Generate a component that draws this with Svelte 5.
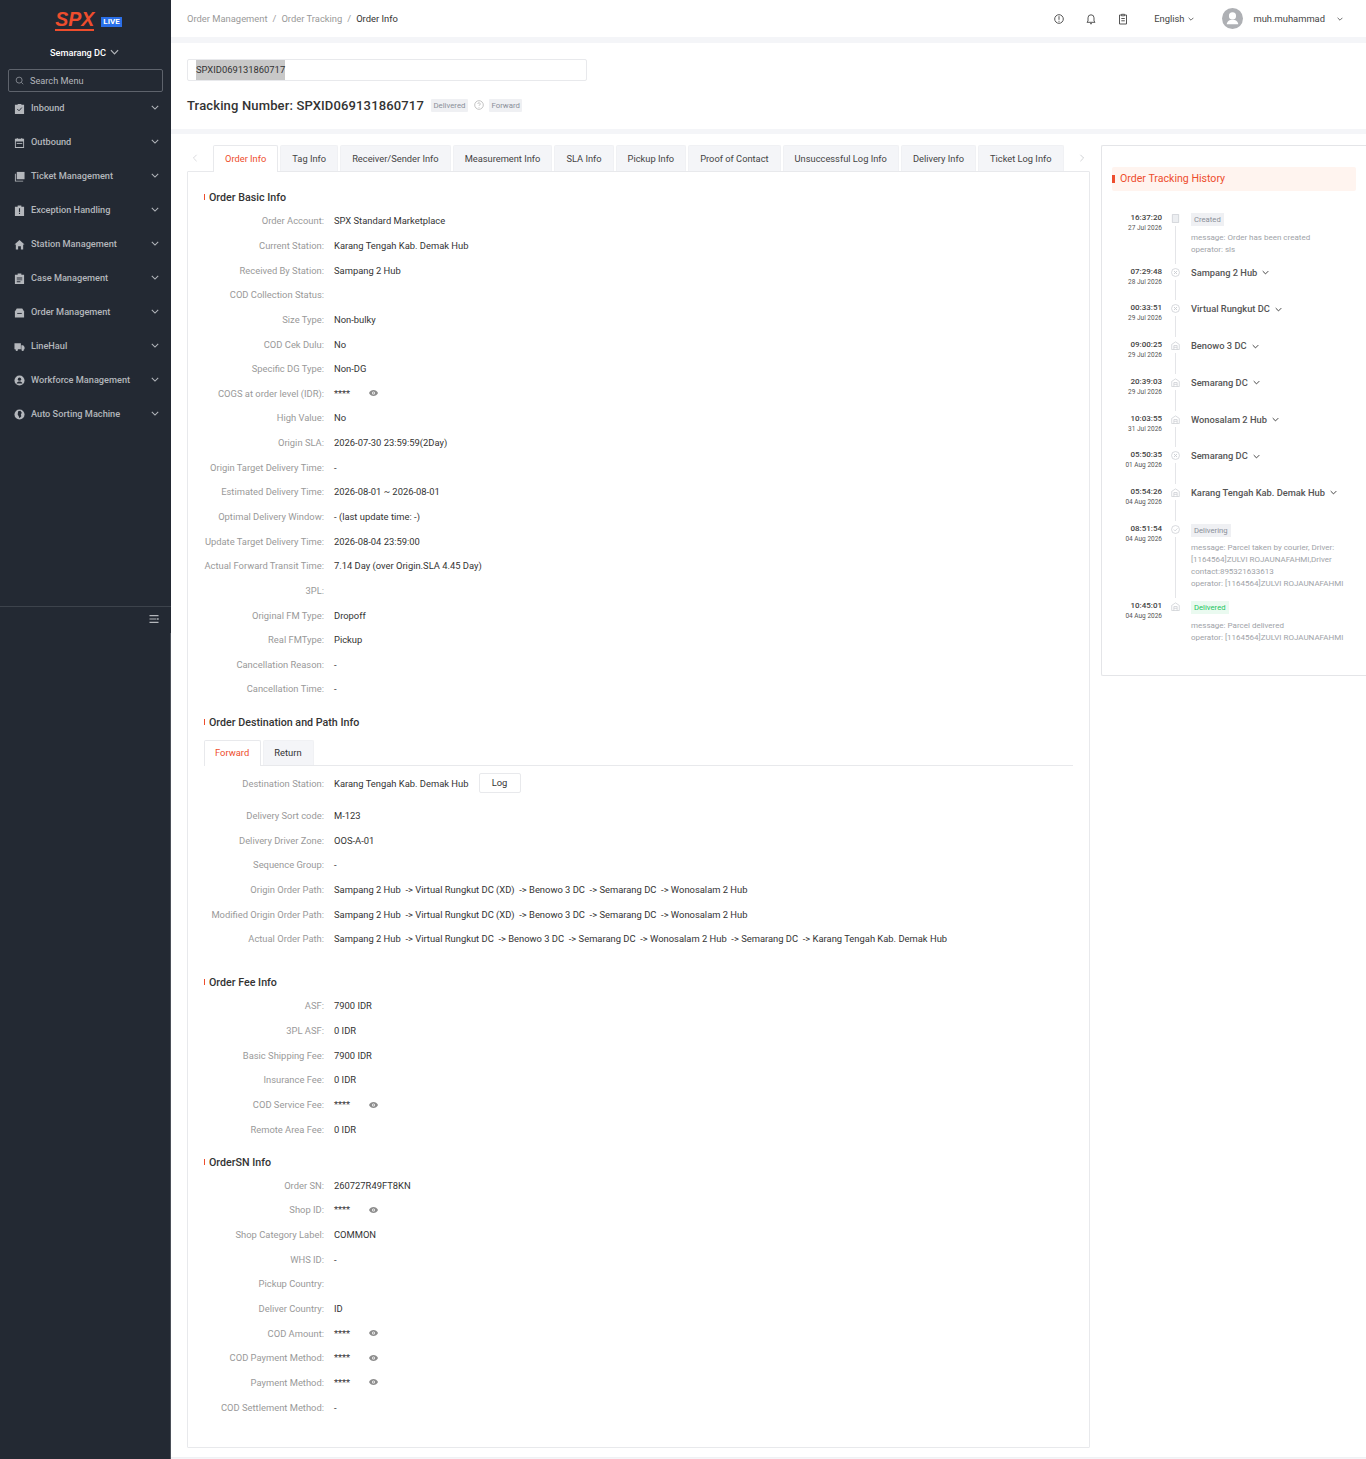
<script lang="ts">
  // Order info page: sidebar, header, tracking summary, detail tabs and history panel.
  const menu = [
    { label: 'Inbound', icon: 'check' },
    { label: 'Outbound', icon: 'cal' },
    { label: 'Ticket Management', icon: 'ticket' },
    { label: 'Exception Handling', icon: 'alert' },
    { label: 'Station Management', icon: 'home' },
    { label: 'Case Management', icon: 'case' },
    { label: 'Order Management', icon: 'order' },
    { label: 'LineHaul', icon: 'truck' },
    { label: 'Workforce Management', icon: 'user' },
    { label: 'Auto Sorting Machine', icon: 'globe' },
  ];

  const tabs = ['Tag Info', 'Receiver/Sender Info', 'Measurement Info', 'SLA Info', 'Pickup Info', 'Proof of Contact', 'Unsuccessful Log Info', 'Delivery Info', 'Ticket Log Info'];

  type Row = [string, string, boolean?];

  const basic: Row[] = [
    ['Order Account', 'SPX Standard Marketplace'],
    ['Current Station', 'Karang Tengah Kab. Demak Hub'],
    ['Received By Station', 'Sampang 2 Hub'],
    ['COD Collection Status', ''],
    ['Size Type', 'Non-bulky'],
    ['COD Cek Dulu', 'No'],
    ['Specific DG Type', 'Non-DG'],
    ['COGS at order level (IDR)', '****', true],
    ['High Value', 'No'],
    ['Origin SLA', '2026-07-30 23:59:59(2Day)'],
    ['Origin Target Delivery Time', '-'],
    ['Estimated Delivery Time', '2026-08-01 ~ 2026-08-01'],
    ['Optimal Delivery Window', '- (last update time: -)'],
    ['Update Target Delivery Time', '2026-08-04 23:59:00'],
    ['Actual Forward Transit Time', '7.14 Day (over Origin.SLA 4.45 Day)'],
    ['3PL', ''],
    ['Original FM Type', 'Dropoff'],
    ['Real FMType', 'Pickup'],
    ['Cancellation Reason', '-'],
    ['Cancellation Time', '-'],
  ];

  const path: Row[] = [
    ['Delivery Sort code', 'M-123'],
    ['Delivery Driver Zone', 'OOS-A-01'],
    ['Sequence Group', '-'],
    ['Origin Order Path', 'Sampang 2 Hub  -> Virtual Rungkut DC (XD)  -> Benowo 3 DC  -> Semarang DC  -> Wonosalam 2 Hub'],
    ['Modified Origin Order Path', 'Sampang 2 Hub  -> Virtual Rungkut DC (XD)  -> Benowo 3 DC  -> Semarang DC  -> Wonosalam 2 Hub'],
    ['Actual Order Path', 'Sampang 2 Hub  -> Virtual Rungkut DC  -> Benowo 3 DC  -> Semarang DC  -> Wonosalam 2 Hub  -> Semarang DC  -> Karang Tengah Kab. Demak Hub'],
  ];

  const fees: Row[] = [
    ['ASF', '7900 IDR'],
    ['3PL ASF', '0 IDR'],
    ['Basic Shipping Fee', '7900 IDR'],
    ['Insurance Fee', '0 IDR'],
    ['COD Service Fee', '****', true],
    ['Remote Area Fee', '0 IDR'],
  ];

  const sn: Row[] = [
    ['Order SN', '260727R49FT8KN'],
    ['Shop ID', '****', true],
    ['Shop Category Label', 'COMMON'],
    ['WHS ID', '-'],
    ['Pickup Country', ''],
    ['Deliver Country', 'ID'],
    ['COD Amount', '****', true],
    ['COD Payment Method', '****', true],
    ['Payment Method', '****', true],
    ['COD Settlement Method', '-'],
  ];

  const history = [
    { time: '16:37:20', date: '27 Jul 2026', icon: 'doc', tag: 'Created', lines: ['message: Order has been created', 'operator: sls'] },
    { time: '07:29:48', date: '28 Jul 2026', icon: 'x', place: 'Sampang 2 Hub' },
    { time: '00:33:51', date: '29 Jul 2026', icon: 'x', place: 'Virtual Rungkut DC' },
    { time: '09:00:25', date: '29 Jul 2026', icon: 'hub', place: 'Benowo 3 DC' },
    { time: '20:39:03', date: '29 Jul 2026', icon: 'hub', place: 'Semarang DC' },
    { time: '10:03:55', date: '31 Jul 2026', icon: 'hub', place: 'Wonosalam 2 Hub' },
    { time: '05:50:35', date: '01 Aug 2026', icon: 'x', place: 'Semarang DC' },
    { time: '05:54:26', date: '04 Aug 2026', icon: 'hub', place: 'Karang Tengah Kab. Demak Hub' },
    { time: '08:51:54', date: '04 Aug 2026', icon: 'ok', tag: 'Delivering', lines: ['message: Parcel taken by courier, Driver:', '[1164564]ZULVI ROJAUNAFAHMI,Driver', 'contact:895321633613', 'operator: [1164564]ZULVI ROJAUNAFAHMI'] },
    { time: '10:45:01', date: '04 Aug 2026', icon: 'hub', tag: 'Delivered', green: true, lines: ['message: Parcel delivered', 'operator: [1164564]ZULVI ROJAUNAFAHMI'] },
  ];
</script>

{#snippet chevron(cls: string)}
  <svg class={cls} viewBox="0 0 10 6" fill="none" stroke="currentColor" stroke-width="1.3"><path d="M1 1l4 4 4-4" /></svg>
{/snippet}

{#snippet eye()}
  <svg class="eye" viewBox="0 0 12 8"><path fill="#8c8c8c" d="M6 0C3.4 0 1.2 1.6 0 4c1.2 2.4 3.4 4 6 4s4.800-1.600 6-4C10.800 1.600 8.600 0 6 0z" /><circle cx="6" cy="4" r="2" fill="#fff" /><circle cx="6" cy="4" r="1.100" fill="#8c8c8c" /></svg>
{/snippet}

{#snippet rows(list: Row[])}
  {#each list as [label, value, secret]}
    <div class="row">
      <span class="label">{label}:</span>
      <span class="value">{value}</span>
      {#if secret}{@render eye()}{/if}
    </div>
  {/each}
{/snippet}

{#snippet menuIcon(name: string)}
  <svg class="micon" viewBox="0 0 12 12" fill="#b4b7bc">
    {#if name === 'check'}
      <path d="M1 2h3V1h4v1h3v10H1z" /><path d="M3.500 6.500l2 2 3-3.500" fill="none" stroke="#232933" stroke-width="1" />
    {:else if name === 'cal'}
      <path d="M1 2h2V1h1v1h4V1h1v1h2v10H1zm1 3v6h8V5z" /><path d="M3 6.500h6v1H3z" />
    {:else if name === 'ticket'}
      <path d="M3 1h8.500v8H3z" /><path d="M1 3h1v7.500h8v1H1z" />
    {:else if name === 'alert'}
      <path d="M1 2h3V.5h4V2h3v10H1z" /><path d="M5.400 3.500h1.200v4H5.400zM5.400 8.500h1.200v1.200H5.400z" fill="#232933" />
    {:else if name === 'home'}
      <path d="M6 1l5.500 5H10v5.500H7.500V8h-3v3.500H2V6H.5z" />
    {:else if name === 'case'}
      <path d="M1 2h3V.5h4V2h3v10H1z" /><path d="M3 5h6v1H3zM3 7h6v1H3zM3 9h4v1H3z" fill="#232933" />
    {:else if name === 'order'}
      <path d="M3 1.500h6L11 5v6.500H1V5z" /><path d="M3.500 6.500h5v1h-5z" fill="#232933" />
    {:else if name === 'truck'}
      <path d="M.5 2.500h7v6.500h-7zM8 4.500h2l1.500 2V9H8z" /><circle cx="3" cy="9.500" r="1.300" /><circle cx="9.500" cy="9.500" r="1.300" />
    {:else if name === 'user'}
      <circle cx="6" cy="6" r="5.500" /><circle cx="6" cy="4.500" r="1.800" fill="#232933" /><path d="M2.800 9.200c.6-1.600 1.800-2.200 3.200-2.200s2.600.6 3.200 2.200z" fill="#232933" />
    {:else}
      <circle cx="6" cy="6" r="5.500" /><path d="M4.500 2.500L7 2l1.500 2-1 2 .5 2-2 2-1-2.500-1-1.500z" fill="#232933" />
    {/if}
  </svg>
{/snippet}

{#snippet timelineIcon(name: string)}
  <svg class="ticon" viewBox="0 0 10 10" fill="none" stroke="#c9ccd1" stroke-width=".8">
    {#if name === 'doc'}
      <path d="M1.500.5h7v9h-7z" fill="#eceef1" />
    {:else if name === 'x'}
      <circle cx="5" cy="5" r="4.400" /><path d="M3.400 3.400l3.200 3.200M6.600 3.400L3.400 6.600" stroke-width="1.100" />
    {:else if name === 'ok'}
      <circle cx="5" cy="5" r="4.400" /><path d="M3 5l1.600 1.600L7.200 3.800" />
    {:else}
      <path d="M.8 9.500V3.800L5 1l4.200 2.800v5.700z" /><path d="M3.200 9.500V5h3.600v4.500M3.200 7h3.600" />
    {/if}
  </svg>
{/snippet}

<div class="page">
  <aside class="sidebar">
    <div class="logo">
      <span class="spx">SPX</span>
      <span class="live">LIVE</span>
    </div>
    <div class="station">Semarang DC {@render chevron('station-chev')}</div>
    <div class="search">
      <svg viewBox="0 0 12 12" fill="none" stroke="#9a9ea6" stroke-width="1"><circle cx="5.500" cy="5.500" r="4" /><path d="M8.500 8.500l2.500 2.500" /></svg>
      Search Menu
    </div>
    <nav class="menu">
      {#each menu as item}
        <div class="menu-item">
          {@render menuIcon(item.icon)}
          <span>{item.label}</span>
          {@render chevron('menu-chev')}
        </div>
      {/each}
    </nav>
    <div class="collapse">
      <svg viewBox="0 0 10 10" fill="#b4b7bc"><path d="M.5 1h9v1.300h-9zM.5 4.400h7v1.200h-7zM8.300 4h1.200v2H8.300zM.5 7.800h9v1.300h-9z" /></svg>
    </div>
  </aside>

  <main class="main">
    <header class="topbar">
      <div class="crumbs">
        <span>Order Management</span><i>/</i><span>Order Tracking</span><i>/</i><b>Order Info</b>
      </div>
      <div class="top-right">
        <svg class="ticn" viewBox="0 0 12 12" fill="none" stroke="#555" stroke-width="1"><circle cx="6" cy="6" r="4.300" /><path d="M6 3.200v3.600M6 7.800v1" /></svg>
        <svg class="ticn" viewBox="0 0 12 12" fill="none" stroke="#555" stroke-width="1"><path d="M2 9.300h8L9 8V4.800a3 3 0 0 0-6 0V8zM5 10.700h2" /></svg>
        <svg class="ticn" viewBox="0 0 12 12" fill="none" stroke="#555" stroke-width="1"><path d="M4.500 2H2.500v9h7V2h-2M4.500 1.300h3v1.500h-3zM4.300 5.500h3.500M4.300 7.800h3.500" /></svg>
        <span class="lang">English {@render chevron('small-chev')}</span>
        <span class="avatar">
          <svg viewBox="0 0 20 20" fill="#fff"><circle cx="10" cy="7.500" r="3.400" /><path d="M4.500 15.500c.3-3 2.800-4.300 5.500-4.300s5.200 1.300 5.500 4.300z" /></svg>
        </span>
        <span class="uname">muh.muhammad</span>
        {@render chevron('small-chev user-chev')}
      </div>
    </header>

    <section class="summary">
      <div class="tracking-input"><span>SPXID069131860717</span></div>
      <div class="title-row">
        <h1>Tracking Number: SPXID069131860717</h1>
        <span class="tag">Delivered</span>
        <svg class="help" viewBox="0 0 10 10" fill="none" stroke="#aaa" stroke-width=".7"><circle cx="5" cy="5" r="4.300" /><path d="M3.800 4a1.200 1.200 0 1 1 1.800 1c-.4.300-.6.500-.6 1M5 7v.7" /></svg>
        <span class="tag">Forward</span>
      </div>
    </section>

    <section class="body">
      <div class="left">
        <div class="tabs">
          <span class="arrow">
            <svg viewBox="0 0 6 10" fill="none" stroke="#d0d2d6" stroke-width="1"><path d="M5 1L1 5l4 4" /></svg>
          </span>
          <span class="tab active">Order Info</span>
          {#each tabs as tab}
            <span class="tab">{tab}</span>
          {/each}
          <span class="arrow next">
            <svg viewBox="0 0 6 10" fill="none" stroke="#c4c6ca" stroke-width="1"><path d="M1 1l4 4-4 4" /></svg>
          </span>
        </div>

        <div class="card">
          <h2>Order Basic Info</h2>
          {@render rows(basic)}

          <h2 class="dest">Order Destination and Path Info</h2>
          <div class="subtabs">
            <span class="subtab active">Forward</span>
            <span class="subtab">Return</span>
          </div>
          <div class="row dest-row">
            <span class="label">Destination Station:</span>
            <span class="value">Karang Tengah Kab. Demak Hub</span>
            <span class="log">Log</span>
          </div>
          {@render rows(path)}

          <h2 class="fee">Order Fee Info</h2>
          {@render rows(fees)}

          <h2 class="sn">OrderSN Info</h2>
          {@render rows(sn)}
        </div>
      </div>

      <aside class="history">
        <div class="history-title">Order Tracking History</div>
        <div class="timeline">
          {#each history as ev, i}
            <div class="event">
              <div class="when">
                <b>{ev.time}</b>
                <small>{ev.date}</small>
              </div>
              <div class="rail">
                {@render timelineIcon(ev.icon)}
                {#if i < history.length - 1}<span class="line"></span>{/if}
              </div>
              <div class="what">
                {#if ev.place}
                  <div class="place">{ev.place} {@render chevron('place-chev')}</div>
                {:else}
                  <span class="ev-tag" class:green={ev.green}>{ev.tag}</span>
                  <div class="lines">
                    {#each ev.lines ?? [] as line}
                      <div>{line}</div>
                    {/each}
                  </div>
                {/if}
              </div>
            </div>
          {/each}
        </div>
      </aside>
    </section>
  </main>
</div>

<style>
  :global(body) {
    margin: 0;
    background: #fff;
  }
  .page {
    display: flex;
    width: 1366px;
    height: 1459px;
    overflow: hidden;
    font-family: Roboto, "Liberation Sans", sans-serif;
    font-size: 9.4px;
    color: #333;
  }

  .sidebar {
    position: relative;
    flex: 0 0 171px;
    background: #232933;
    color: #b4b7bc;
    font-size: 9.2px;
  }
  .sidebar::after {
    content: "";
    position: absolute;
    right: 0;
    top: 633px;
    bottom: 0;
    width: 1px;
    background: #4b5059;
  }
  .logo {
    display: flex;
    align-items: center;
    justify-content: center;
    gap: 7px;
    height: 40px;
    padding-left: 6px;
  }
  .spx {
    font-family: "Liberation Sans", sans-serif;
    font-size: 19.5px;
    font-weight: 700;
    font-style: italic;
    color: #ee4d2d;
    line-height: 20px;
    border-bottom: 2px solid #ee4d2d;
  }
  .live {
    background: #2a6fe8;
    color: #fff;
    font-size: 8px;
    font-weight: 700;
    line-height: 10px;
    padding: 0 2px;
    margin-top: 3px;
  }
  .station {
    display: flex;
    align-items: center;
    justify-content: center;
    gap: 4px;
    height: 24px;
    padding-right: 2px;
    color: #fff;
    font-weight: 500;
  }
  .station-chev {
    width: 9px;
    height: 6px;
    color: #b4b7bc;
  }
  .search {
    display: flex;
    align-items: center;
    gap: 6px;
    height: 21px;
    margin: 5px 8px 0;
    padding-left: 6px;
    border: 1px solid #5e636c;
    border-radius: 2px;
    color: #b4b7bc;
  }
  .search svg {
    width: 9px;
    height: 9px;
  }
  .menu {
    margin-top: -2px;
  }
  .menu-item {
    display: flex;
    align-items: center;
    height: 34px;
    padding: 0 12px 0 14px;
    font-weight: 500;
  }
  .menu-item span {
    flex: 1;
    margin-left: 6px;
  }
  .micon {
    width: 11px;
    height: 11px;
    margin-top: 2px;
  }
  .menu-chev {
    width: 8px;
    height: 5px;
    margin-top: 1px;
  }
  .collapse {
    display: flex;
    justify-content: flex-end;
    margin-top: 176px;
    padding: 7px 12px 0 0;
    border-top: 1px solid #3d434c;
  }
  .collapse svg {
    width: 10px;
    height: 10px;
  }

  .main {
    flex: 1;
    min-width: 0;
    background: #f4f5f8;
    display: flex;
    flex-direction: column;
  }
  .topbar {
    flex: 0 0 37px;
    display: flex;
    align-items: center;
    justify-content: space-between;
    padding: 0 21px 0 16px;
    background: #fff;
  }
  .crumbs {
    color: #999;
  }
  .crumbs i {
    font-style: normal;
    margin: 0 5px;
  }
  .crumbs b {
    font-weight: 400;
    color: #333;
  }
  .top-right {
    display: flex;
    align-items: center;
    color: #444;
  }
  .ticn {
    width: 12px;
    height: 12px;
    margin-right: 20px;
  }
  .lang {
    display: flex;
    align-items: center;
    gap: 4px;
    margin: 0 28px 0 5px;
  }
  .small-chev {
    width: 6px;
    height: 4px;
  }
  .user-chev {
    margin-left: 12px;
    margin-right: 2px;
  }
  .avatar {
    display: flex;
    width: 21px;
    height: 21px;
    border-radius: 50%;
    background: #aeb0b4;
  }
  .uname {
    margin-left: 10px;
  }

  .summary {
    box-sizing: border-box;
    flex: 0 0 86px;
    margin-top: 6px;
    padding: 16px 16px 0;
    background: #fff;
  }
  .tracking-input {
    display: flex;
    align-items: center;
    box-sizing: border-box;
    width: 400px;
    height: 22px;
    padding-left: 8px;
    border: 1px solid #e8e9ec;
    border-radius: 2px;
    color: #333;
  }
  .tracking-input span {
    background: #c8c8c8;
    line-height: 20px;
  }
  .title-row {
    display: flex;
    align-items: center;
    height: 26px;
    margin-top: 11px;
  }
  h1 {
    margin: 0 7px 0 0;
    font-size: 13px;
    font-weight: 500;
    letter-spacing: 0.15px;
    color: #333;
  }
  .tag {
    padding: 0 2.5px;
    line-height: 13px;
    font-size: 7.8px;
    color: #8a8f99;
    background: #eff0f3;
    border-radius: 1px;
  }
  .help {
    width: 10px;
    height: 10px;
    margin: 0 5px 0 6px;
  }

  .body {
    flex: 1;
    display: flex;
    gap: 11px;
    margin-top: 5px;
    margin-bottom: 1px;
    padding: 11px 0 0 16px;
    background: #fff;
    border-bottom: 1px solid #f0f1f4;
  }
  .left {
    flex: 0 0 903px;
    min-width: 0;
  }
  .tabs {
    display: flex;
    align-items: flex-end;
    gap: 2px;
    height: 26px;
    font-size: 9.3px;
  }
  .arrow {
    box-sizing: border-box;
    flex: 0 0 24px;
    align-self: center;
    display: flex;
    justify-content: center;
    padding-right: 8px;
  }
  .arrow svg {
    width: 6px;
    height: 8px;
  }
  .arrow.next {
    flex-basis: 32px;
    padding-right: 0;
  }
  .tab {
    box-sizing: border-box;
    height: 26px;
    padding: 0 11px;
    line-height: 26px;
    background: #f4f5f8;
    border: 1px solid #f0f1f4;
    border-bottom: 0;
    border-radius: 2px 2px 0 0;
    color: #444;
    white-space: nowrap;
  }
  .tab.active {
    height: 27px;
    margin-bottom: -1px;
    background: #fff;
    color: #ee4d2d;
    border-color: #e8e9ec;
  }
  .card {
    box-sizing: border-box;
    height: 1277px;
    padding: 17px 16px 0;
    border: 1px solid #e8e9ec;
    border-radius: 1px;
  }
  h2 {
    position: relative;
    margin: 0 0 1.5px;
    padding-left: 5px;
    height: 18px;
    line-height: 18px;
    font-size: 10.7px;
    font-weight: 500;
    color: #333;
  }
  h2::before {
    content: "";
    position: absolute;
    left: 0;
    top: 5px;
    width: 1px;
    height: 6px;
    background: #ee4d2d;
  }
  h2.dest {
    margin-top: 13px;
    margin-bottom: 0;
  }
  h2.fee {
    margin-top: 23px;
  }
  h2.sn {
    margin-top: 12px;
  }
  .row {
    display: flex;
    align-items: center;
    height: 24.65px;
  }
  .label {
    display: flex;
    justify-content: flex-end;
    flex: 0 0 120px;
    color: #999;
    white-space: nowrap;
    margin-right: 10px;
  }
  .value {
    color: #333;
    white-space: pre;
  }
  .eye {
    width: 9px;
    height: 6px;
    margin-left: 19px;
  }
  .subtabs {
    display: flex;
    gap: 2px;
    height: 25px;
    margin-top: 8px;
    border-bottom: 1px solid #e8e9ec;
  }
  .subtab {
    box-sizing: border-box;
    height: 25px;
    padding: 0 11px 0 10px;
    line-height: 24px;
    border: 1px solid #f0f1f4;
    border-bottom: 0;
    border-radius: 2px 2px 0 0;
    background: #f4f5f8;
  }
  .subtab.active {
    height: 26px;
    background: #fff;
    color: #ee4d2d;
    border-color: #e8e9ec;
  }
  .dest-row {
    height: 20px;
    margin: 7px 0 10px;
  }
  .log {
    box-sizing: border-box;
    height: 20px;
    width: 42px;
    margin-left: 10px;
    line-height: 18px;
    text-align: center;
    border: 1px solid #e8e9ec;
    border-radius: 2px;
  }

  .history {
    box-sizing: border-box;
    flex: 0 0 265px;
    height: 531px;
    padding: 21px 0 0 10px;
    border: 1px solid #e4e5e8;
    border-right: 0;
    border-radius: 2px 0 0 2px;
  }
  .history-title {
    position: relative;
    box-sizing: border-box;
    width: 244px;
    height: 24px;
    padding-left: 8px;
    line-height: 24px;
    background: #fff4ef;
    border-radius: 2px;
    color: #ee4d2d;
    font-size: 10.6px;
  }
  .history-title::before {
    content: "";
    position: absolute;
    left: 0;
    top: 8px;
    width: 3px;
    height: 8px;
    background: #ee4d2d;
  }
  .timeline {
    margin-top: 21px;
  }
  .event {
    display: flex;
    min-height: 36.7px;
  }
  .when {
    flex: 0 0 50px;
    text-align: right;
    line-height: 11px;
  }
  .when b {
    display: block;
    font-size: 8px;
    font-weight: 500;
    color: #444;
  }
  .when small {
    display: block;
    font-size: 6.5px;
    color: #555;
  }
  .rail {
    box-sizing: border-box;
    flex: 0 0 29px;
    padding-right: 2px;
    display: flex;
    flex-direction: column;
    align-items: center;
  }
  .ticon {
    flex: none;
    width: 9px;
    height: 9px;
    margin-top: 2px;
  }
  .line {
    flex: 1;
    width: 1px;
    margin: 3px 0 2px;
    background: #e4e5e8;
  }
  .what {
    flex: 1;
    min-width: 0;
  }
  .place {
    display: flex;
    align-items: center;
    gap: 5px;
    margin-top: 1px;
    font-size: 9.3px;
    font-weight: 500;
    color: #555;
    line-height: 12px;
  }
  .place-chev {
    width: 7px;
    height: 5px;
    color: #333;
  }
  .ev-tag {
    display: inline-block;
    margin-top: 1px;
    padding: 0 3px;
    line-height: 13px;
    font-size: 7.7px;
    background: #eff0f3;
    color: #8a8f99;
    vertical-align: top;
  }
  .ev-tag.green {
    background: #eafaf0;
    color: #22c55e;
  }
  .lines {
    margin-top: 5.5px;
    padding-bottom: 10.3px;
    font-size: 8px;
    line-height: 12px;
    color: #a0a3a8;
    white-space: nowrap;
  }
</style>
